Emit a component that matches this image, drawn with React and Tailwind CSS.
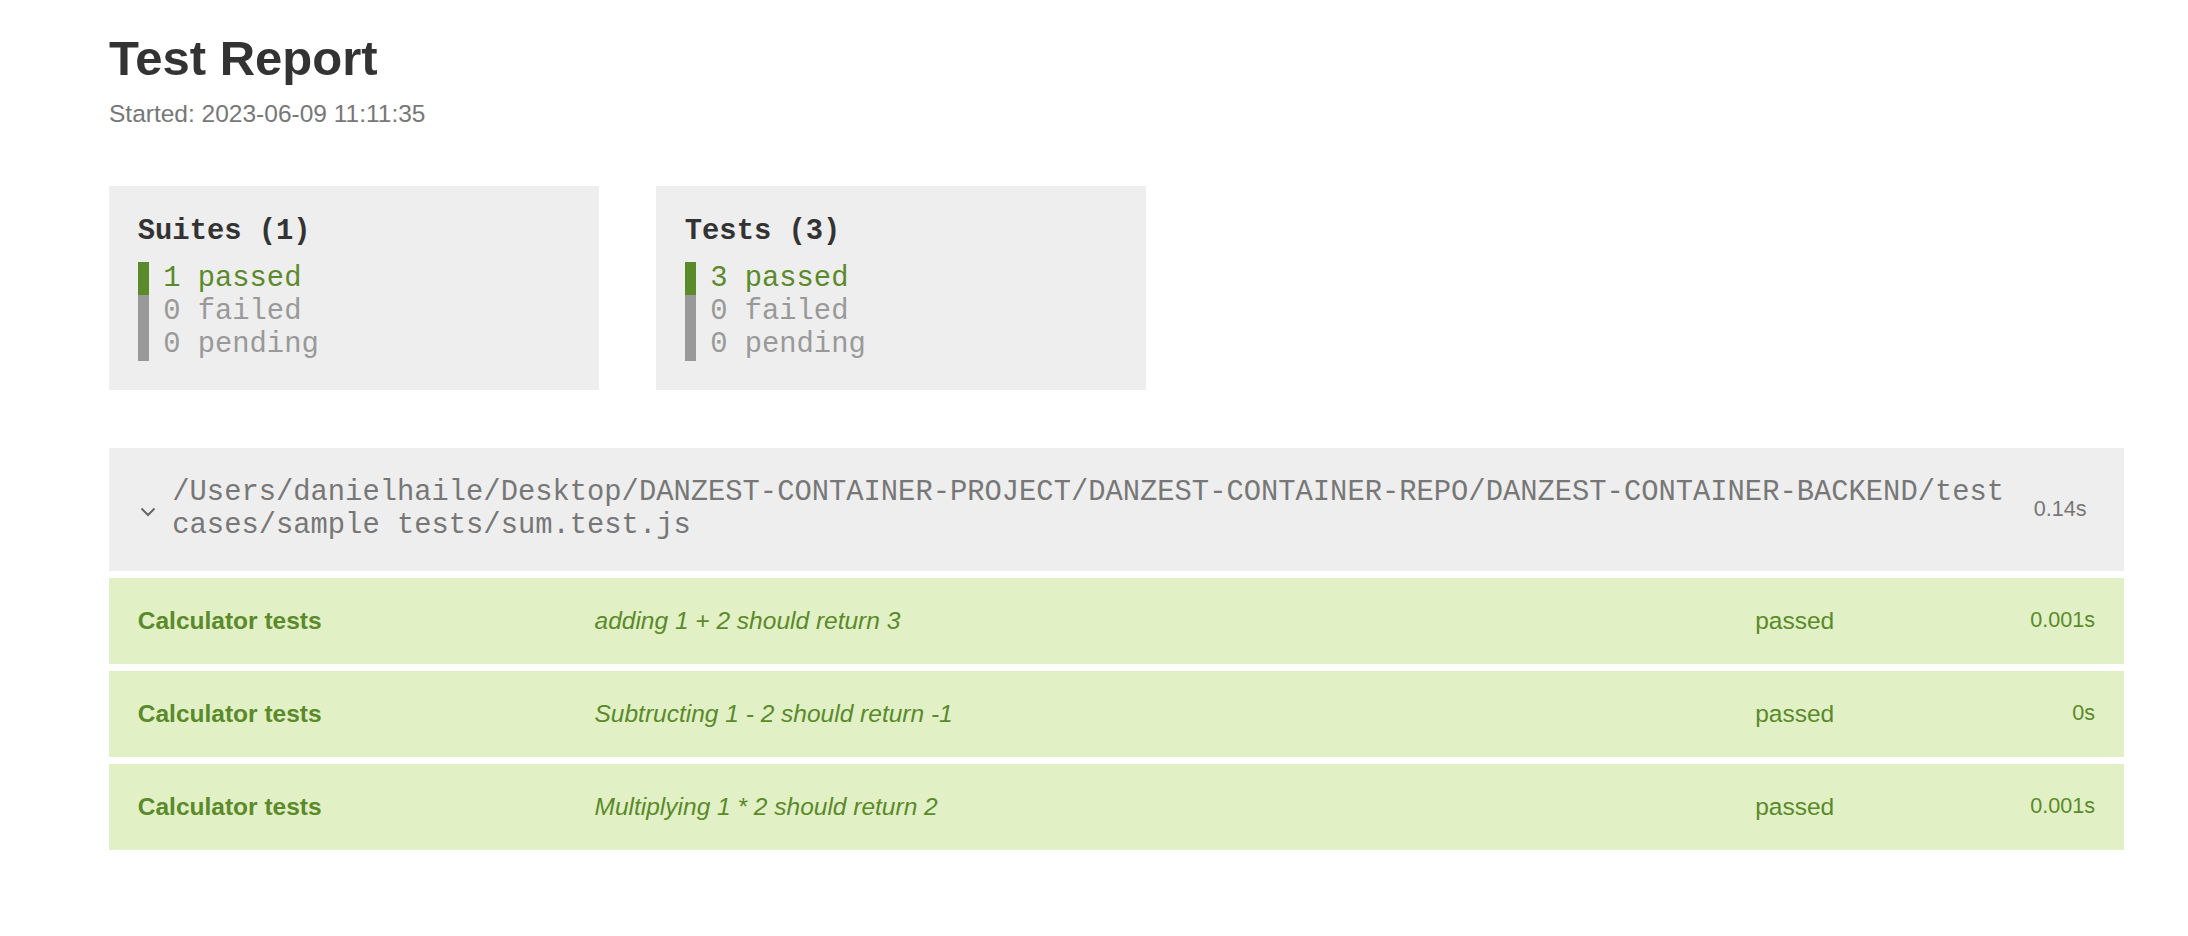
import React from "react";

const summaries = [
  { title: "Suites (1)", passed: 1, failed: 0, pending: 0 },
  { title: "Tests (3)", passed: 3, failed: 0, pending: 0 },
];

const results = [
  { suite: "Calculator tests", title: "adding 1 + 2 should return 3", status: "passed", duration: "0.001s" },
  { suite: "Calculator tests", title: "Subtructing 1 - 2 should return -1", status: "passed", duration: "0s" },
  { suite: "Calculator tests", title: "Multiplying 1 * 2 should return 2", status: "passed", duration: "0.001s" },
];

const SummaryBox = ({ summary }) => (
  <div className="bg-[#eeeeee] p-[28.8px] w-[490px] box-border">
    <div className="font-bold text-[#333] mb-[14.4px] leading-[33px]">{summary.title}</div>
    <div className="text-[#5a8a2a] border-l-[11.5px] border-[#5a8a2a] pl-[14.4px] leading-[33px]">
      {summary.passed} passed
    </div>
    <div className="text-[#999] border-l-[11.5px] border-[#999] pl-[14.4px] leading-[33px]">
      {summary.failed} failed
    </div>
    <div className="text-[#999] border-l-[11.5px] border-[#999] pl-[14.4px] leading-[33px]">
      {summary.pending} pending
    </div>
  </div>
);

export default function App() {
  return (
    <div
      className="min-h-[936px] bg-white text-[#333] text-[24.5px] pt-[30px]"
      style={{ fontFamily: '"Liberation Sans", Arial, sans-serif' }}
    >
      <div className="ml-[109px] w-[2015px]">
        <h1 className="m-0 text-[49px] leading-[56px] font-bold text-[#333]">Test Report</h1>
        <div className="mt-[14px] text-[#777] leading-[28px]">Started: 2023-06-09 11:11:35</div>

        <div
          className="flex gap-[57px] mt-[58px] mb-[57.6px] text-[28.8px]"
          style={{ fontFamily: '"Liberation Mono", "Courier New", monospace' }}
        >
          {summaries.map((s) => (
            <SummaryBox key={s.title} summary={s} />
          ))}
        </div>

        {/* suite header */}
        <div className="flex items-center bg-[#eeeeee] text-[#777] p-[28.8px] mb-[7.2px]">
          <div className="w-[34.5px] shrink-0 mt-[5px]">
            <svg width="16" height="10" viewBox="0 0 16 10" className="ml-[2px]">
              <polyline points="1.5,1.5 8,8 14.5,1.5" fill="none" stroke="#666" strokeWidth="2" />
            </svg>
          </div>
          <div
            className="flex-1 text-[28.8px] leading-[33px]"
            style={{ fontFamily: '"Liberation Mono", "Courier New", monospace' }}
          >
            /Users/danielhaile/Desktop/DANZEST-CONTAINER-PROJECT/DANZEST-CONTAINER-REPO/DANZEST-CONTAINER-BACKEND/test cases/sample tests/sum.test.js
          </div>
          <div className="ml-[14.4px] px-[8.6px] py-[5.8px] text-[21.6px]">0.14s</div>
        </div>

        {results.map((r, i) => (
          <div key={i} className="bg-[#e2f0c6] text-[#5a8a2a] p-[28.8px] mb-[7.2px] leading-[28px]">
            <div className="flex justify-between">
              <div className="w-[20%] font-bold">{r.suite}</div>
              <div className="w-[40%] italic">{r.title}</div>
              <div className="w-[20%] text-right">{r.status}</div>
              <div className="w-[10%] text-right text-[21.6px] leading-[25px]">{r.duration}</div>
            </div>
          </div>
        ))}
      </div>
    </div>
  );
}
